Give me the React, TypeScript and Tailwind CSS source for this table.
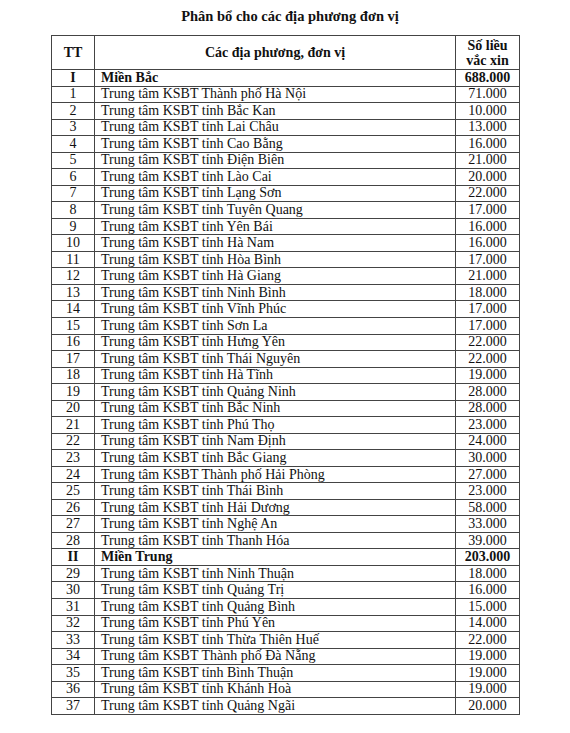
import React from "react";

type Row = { tt: string; name: string; qty: string; bold?: boolean };

const rows: Row[] = [
  { tt: "I", name: "Miền Bắc", qty: "688.000", bold: true },
  { tt: "1", name: "Trung tâm KSBT Thành phố Hà Nội", qty: "71.000" },
  { tt: "2", name: "Trung tâm KSBT tỉnh Bắc Kan", qty: "10.000" },
  { tt: "3", name: "Trung tâm KSBT tỉnh Lai Châu", qty: "13.000" },
  { tt: "4", name: "Trung tâm KSBT tỉnh Cao Bằng", qty: "16.000" },
  { tt: "5", name: "Trung tâm KSBT tỉnh Điện Biên", qty: "21.000" },
  { tt: "6", name: "Trung tâm KSBT tỉnh Lào Cai", qty: "20.000" },
  { tt: "7", name: "Trung tâm KSBT tỉnh Lạng Sơn", qty: "22.000" },
  { tt: "8", name: "Trung tâm KSBT tỉnh Tuyên Quang", qty: "17.000" },
  { tt: "9", name: "Trung tâm KSBT tỉnh Yên Bái", qty: "16.000" },
  { tt: "10", name: "Trung tâm KSBT tỉnh Hà Nam", qty: "16.000" },
  { tt: "11", name: "Trung tâm KSBT tỉnh Hòa Bình", qty: "17.000" },
  { tt: "12", name: "Trung tâm KSBT tỉnh Hà Giang", qty: "21.000" },
  { tt: "13", name: "Trung tâm KSBT tỉnh Ninh Bình", qty: "18.000" },
  { tt: "14", name: "Trung tâm KSBT tỉnh Vĩnh Phúc", qty: "17.000" },
  { tt: "15", name: "Trung tâm KSBT tỉnh Sơn La", qty: "17.000" },
  { tt: "16", name: "Trung tâm KSBT tỉnh Hưng Yên", qty: "22.000" },
  { tt: "17", name: "Trung tâm KSBT tỉnh Thái Nguyên", qty: "22.000" },
  { tt: "18", name: "Trung tâm KSBT tỉnh Hà Tĩnh", qty: "19.000" },
  { tt: "19", name: "Trung tâm KSBT tỉnh Quảng Ninh", qty: "28.000" },
  { tt: "20", name: "Trung tâm KSBT tỉnh Bắc Ninh", qty: "28.000" },
  { tt: "21", name: "Trung tâm KSBT tỉnh Phú Thọ", qty: "23.000" },
  { tt: "22", name: "Trung tâm KSBT tỉnh Nam Định", qty: "24.000" },
  { tt: "23", name: "Trung tâm KSBT tỉnh Bắc Giang", qty: "30.000" },
  { tt: "24", name: "Trung tâm KSBT Thành phố Hải Phòng", qty: "27.000" },
  { tt: "25", name: "Trung tâm KSBT tỉnh Thái Bình", qty: "23.000" },
  { tt: "26", name: "Trung tâm KSBT tỉnh Hải Dương", qty: "58.000" },
  { tt: "27", name: "Trung tâm KSBT tỉnh Nghệ An", qty: "33.000" },
  { tt: "28", name: "Trung tâm KSBT tỉnh Thanh Hóa", qty: "39.000" },
  { tt: "II", name: "Miền Trung", qty: "203.000", bold: true },
  { tt: "29", name: "Trung tâm KSBT tỉnh Ninh Thuận", qty: "18.000" },
  { tt: "30", name: "Trung tâm KSBT tỉnh Quảng Trị", qty: "16.000" },
  { tt: "31", name: "Trung tâm KSBT tỉnh Quảng Bình", qty: "15.000" },
  { tt: "32", name: "Trung tâm KSBT tỉnh Phú Yên", qty: "14.000" },
  { tt: "33", name: "Trung tâm KSBT tỉnh Thừa Thiên Huế", qty: "22.000" },
  { tt: "34", name: "Trung tâm KSBT Thành phố Đà Nẵng", qty: "19.000" },
  { tt: "35", name: "Trung tâm KSBT tỉnh Bình Thuận", qty: "19.000" },
  { tt: "36", name: "Trung tâm KSBT tỉnh Khánh Hoà", qty: "19.000" },
  { tt: "37", name: "Trung tâm KSBT tỉnh Quảng Ngãi", qty: "20.000" },
];

export default function App() {
  return (
    <div
      className="w-[570px] h-[733px] bg-white text-[#111] overflow-hidden"
      style={{ fontFamily: '"Liberation Serif", "Times New Roman", serif' }}
    >
      <h1 className="pt-[7px] h-[35px] text-center text-[14.5px] leading-[18px] font-bold pl-[10px]">
        Phân bổ cho các địa phương đơn vị
      </h1>
      <table className="ml-[51px] w-[468px] border-collapse table-fixed text-[14px] leading-[14px]">
        <colgroup>
          <col className="w-[43px]" />
          <col className="w-[361px]" />
          <col className="w-[64px]" />
        </colgroup>
        <thead>
          <tr className="h-[34px] font-bold">
            <th className="border border-[#444] text-center align-middle p-0">TT</th>
            <th className="border border-[#444] text-center align-middle p-0">Các địa phương, đơn vị</th>
            <th className="border border-[#444] text-center align-middle p-0 leading-[15px]">
              Số liều
              <br />
              vắc xin
            </th>
          </tr>
        </thead>
        <tbody>
          {rows.map((r) => (
            <tr key={r.tt} className={r.bold ? "h-[16.54px] font-bold" : "h-[16.54px]"}>
              <td className="border border-[#444] text-center p-0 align-middle">{r.tt}</td>
              <td className="border border-[#444] pl-[6px] p-0 align-middle whitespace-nowrap">{r.name}</td>
              <td className="border border-[#444] text-center p-0 align-middle">{r.qty}</td>
            </tr>
          ))}
        </tbody>
      </table>
    </div>
  );
}
